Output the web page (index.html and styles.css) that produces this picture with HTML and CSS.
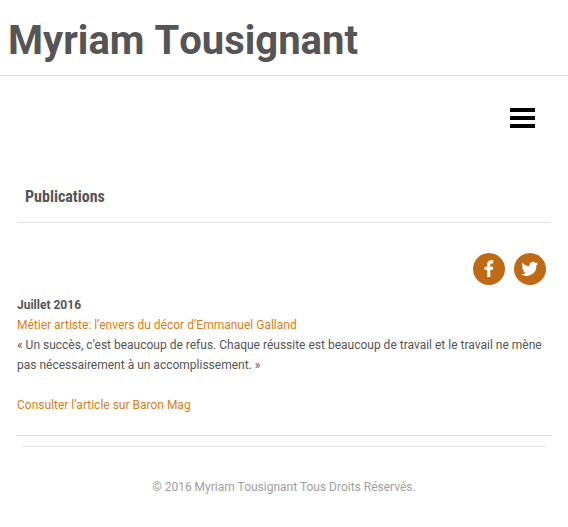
FILE: index.html
```html
<!DOCTYPE html>
<html lang="fr">
<head>
<meta charset="utf-8">
<meta name="viewport" content="width=device-width, initial-scale=1">
<title>Publications</title>
<link rel="stylesheet" href="styles.css">
</head>
<body>
<header class="site-header">
  <h1 class="site-title">Myriam Tousignant</h1>
</header>
<nav class="site-nav">
  <button class="menu-button" type="button" aria-label="Menu">
    <span class="menu-bar"></span>
    <span class="menu-bar"></span>
    <span class="menu-bar"></span>
  </button>
</nav>
<main class="content">
  <h2 class="page-title">Publications</h2>
  <div class="share">
    <a class="share-link" href="#" aria-label="Facebook">
      <svg viewBox="0 0 32 32" aria-hidden="true"><path d="M17.300 24v-7.300h2.600l.4-3h-3v-1.800c0-.9.3-1.500 1.500-1.500h1.500V7.300c-.3 0-1.200-.1-2.200-.1-2.300 0-3.900 1.400-3.900 3.900v2.600h-2.700v3h2.700V24z"/></svg>
    </a>
    <a class="share-link" href="#" aria-label="Twitter">
      <svg viewBox="0 0 32 32" aria-hidden="true"><path d="M24.200 10.600c-.6.300-1.300.5-2 .6.700-.4 1.300-1.100 1.500-1.900-.7.400-1.400.7-2.200.8a3.450 3.450 0 0 0-5.900 3.200c-2.900-.1-5.400-1.500-7.100-3.600a3.450 3.450 0 0 0 1.100 4.600c-.6 0-1.100-.2-1.600-.4 0 1.700 1.200 3.100 2.800 3.400-.5.100-1 .2-1.600.1.400 1.400 1.700 2.400 3.200 2.400a7 7 0 0 1-5.100 1.400 9.800 9.800 0 0 0 15.100-8.700c.7-.5 1.300-1.100 1.800-1.900z"/></svg>
    </a>
  </div>
  <article class="article">
    <h3 class="article-date">Juillet 2016</h3>
    <p><a href="#">Métier artiste: l’envers du décor d’Emmanuel Galland</a></p>
    <p>« Un succès, c’est beaucoup de refus. Chaque réussite est beaucoup de travail et le travail ne mène pas nécessairement à un accomplissement. »</p>
    <p class="article-more"><a href="#">Consulter l’article sur Baron Mag</a></p>
  </article>
</main>
<footer class="site-footer">
  <p class="copyright">© 2016 Myriam Tousignant Tous Droits Réservés.</p>
</footer>
</body>
</html>
```
FILE: styles.css
```css
* {
  box-sizing: border-box;
}

body {
  margin: 0;
  background: #fff;
  color: #555;
  font: 12px/20px Roboto, "Liberation Sans", sans-serif;
}

h1, h2, h3, p {
  margin: 0;
}

a {
  color: #d98014;
  text-decoration: none;
}

.site-header {
  padding: 17px 8px 10px;
  border-bottom: 1px solid #e0e0e0;
}

.site-title {
  font-size: 40px;
  line-height: 48px;
  font-kerning: none;
}

.site-nav {
  display: flex;
  justify-content: flex-end;
  padding: 32px 33px;
}

.menu-button {
  display: grid;
  gap: 4px;
  width: 25px;
  padding: 0;
  border: 0;
  background: none;
  cursor: pointer;
}

.menu-bar {
  height: 4px;
  background: #000;
}

.content {
  margin: 0 17px;
  padding: 27px 0 20px;
  border-bottom: 1px solid #e0e0e0;
}

.page-title {
  padding: 0 8px 15px;
  border-bottom: 1px solid #e0e0e0;
  font: bold 16px/20px "Roboto Condensed", Roboto, sans-serif;
}

.share {
  display: flex;
  justify-content: flex-end;
  gap: 9px;
  padding: 30px 5px 10px;
}

.share-link {
  width: 32px;
  height: 32px;
  border-radius: 50%;
  background: #bf6a14;
}

.share-link svg {
  display: block;
  fill: #fff;
}

.article-date {
  font-size: 12px;
  line-height: 20px;
}

.article-more {
  margin-top: 20px;
}

.site-footer {
  margin: 10px 23px 0;
  padding: 30px 0;
  border-top: 1px solid #e0e0e0;
  color: #a0a0a0;
  text-align: center;
}
```
